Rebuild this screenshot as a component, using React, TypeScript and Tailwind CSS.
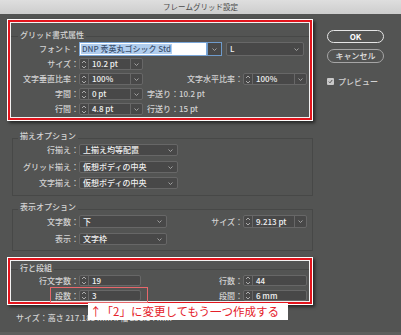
import React from "react";

const FONT = "font-['Noto_Sans_CJK_JP','Noto_Sans',sans-serif]";

function Chevron() {
  return (
    <svg width="5" height="3" viewBox="0 0 5 3" className="block">
      <path d="M0.5 0.5 L2.5 2.5 L4.5 0.5" stroke="#a9a9a9" strokeWidth="0.9" fill="none" />
    </svg>
  );
}

function UpDown() {
  return (
    <svg width="6" height="9" viewBox="0 0 6 9" className="block">
      <path d="M1 3 L3 1 L5 3 M1 6 L3 8 L5 6" stroke="#c4c4c4" strokeWidth="0.8" fill="none" />
    </svg>
  );
}

function Spinner({ value, className, chevron = true }: { value: string; className: string; chevron?: boolean }) {
  return (
    <div className={`flex shrink-0 border border-[#676767] bg-[#484848] rounded-[2px] ${className}`}>
      <div className="w-[9px] shrink-0 flex items-center justify-center border-r border-[#676767]">
        <UpDown />
      </div>
      <div className="flex-1 pl-[3px] flex items-center text-[#f0f0f0] leading-none">{value}</div>
      {chevron && (
        <div className="w-[12px] shrink-0 flex items-center justify-center border-l border-[#676767]">
          <Chevron />
        </div>
      )}
    </div>
  );
}

function Dropdown({ value, className }: { value: string; className: string }) {
  return (
    <div
      className={`flex shrink-0 items-center justify-between border border-[#676767] bg-[#484848] rounded-[2px] pl-[3px] pr-[4px] ${className}`}
    >
      <span className="text-[#f0f0f0] leading-none">{value}</span>
      <Chevron />
    </div>
  );
}

function Label({ children, className }: { children: React.ReactNode; className: string }) {
  return <div className={`shrink-0 self-center text-right leading-none text-[#d2d2d2] ${className}`}>{children}</div>;
}

function RedBox({ children, className }: { children: React.ReactNode; className: string }) {
  return (
    <div className={`border border-white shadow-[2px_2px_3px_rgba(0,0,0,0.55)] ${className}`}>
      <div className="border-2 border-[#e3141c]">
        <div className="border border-[#f2f2f2]">{children}</div>
      </div>
    </div>
  );
}

export default function App() {
  return (
    <div className={`relative w-[401px] h-[335px] overflow-hidden bg-[#535453] text-[8px] font-medium ${FONT}`}>
      {/* title bar */}
      <div className="h-[14px] bg-gradient-to-b from-[#dedede] to-[#cdcdcd] flex items-center justify-center text-[7.5px] font-normal text-[#4a4a4a]">
        フレームグリッド設定
      </div>

      <div className="flex">
        {/* left column */}
        <div className="w-[313px] pl-[7px] shrink-0">
          {/* group 1 */}
          <RedBox className="mt-[5px] w-[306px]">
            <fieldset className="mt-[8px] border-0 border-t border-[#474847] pb-[2px]">
              <legend className="ml-[7px] px-[2px] leading-[8px] pb-[3px] text-[#d6d6d6]">グリッド書式属性</legend>
              <div className="flex h-[14px]">
                <Label className="w-[68px]">フォント：</Label>
                <div className="w-[128px] shrink-0 bg-white border border-[#7aa6d8] flex items-center pl-[1px]">
                  <span className="bg-[#b0cdee] text-[#3d5270] leading-[10px] px-[1px]">DNP 秀英丸ゴシック Std</span>
                </div>
                <div className="w-[15px] shrink-0 border border-[#6f9bcb] bg-[#484848] flex items-center justify-center">
                  <Chevron />
                </div>
                <Dropdown value="L" className="ml-[4px] w-[78px]" />
              </div>
              <div className="flex h-[12px] mt-[2px]">
                <Label className="w-[68px]">サイズ：</Label>
                <Spinner value="10.2 pt" className="w-[64px]" />
              </div>
              <div className="flex h-[12px] mt-[3px]">
                <Label className="w-[68px]">文字垂直比率：</Label>
                <Spinner value="100%" className="w-[64px]" />
                <Label className="flex-1">文字水平比率：</Label>
                <Spinner value="100%" className="w-[64px] mr-[2px]" />
              </div>
              <div className="flex h-[12px] mt-[3px]">
                <Label className="w-[68px]">字間：</Label>
                <Spinner value="0 pt" className="w-[64px]" />
                <div className="ml-[4px] self-center leading-none text-[#d2d2d2]">字送り：10.2 pt</div>
              </div>
              <div className="flex h-[12px] mt-[3px]">
                <Label className="w-[68px]">行間：</Label>
                <Spinner value="4.8 pt" className="w-[64px]" />
                <div className="ml-[4px] self-center leading-none text-[#d2d2d2]">行送り：15 pt</div>
              </div>
            </fieldset>
          </RedBox>

          {/* group 2 */}
          <fieldset className="mt-[11px] ml-[5px] border border-[#474847] pb-[6px]">
            <legend className="ml-[5px] px-[2px] leading-[8px] pb-[4px] text-[#d6d6d6]">揃えオプション</legend>
            <div className="flex h-[12px]">
              <Label className="w-[66px]">行揃え：</Label>
              <Dropdown value="上揃え均等配置" className="w-[99px]" />
            </div>
            <div className="flex h-[12px] mt-[5px]">
              <Label className="w-[66px]">グリッド揃え：</Label>
              <Dropdown value="仮想ボディの中央" className="w-[99px]" />
            </div>
            <div className="flex h-[12px] mt-[4px]">
              <Label className="w-[66px]">文字揃え：</Label>
              <Dropdown value="仮想ボディの中央" className="w-[99px]" />
            </div>
          </fieldset>

          {/* group 3 */}
          <fieldset className="mt-[7px] ml-[5px] border border-[#474847] pb-[5px]">
            <legend className="ml-[5px] px-[2px] leading-[8px] pb-[4px] text-[#d6d6d6]">表示オプション</legend>
            <div className="flex h-[13px]">
              <Label className="w-[66px]">文字数：</Label>
              <Dropdown value="下" className="w-[88px]" />
              <Label className="flex-1">サイズ：</Label>
              <Spinner value="9.213 pt" className="w-[64px] mr-[5px]" />
            </div>
            <div className="flex h-[12px] mt-[5px]">
              <Label className="w-[66px]">表示：</Label>
              <Dropdown value="文字枠" className="w-[88px]" />
            </div>
          </fieldset>

          {/* group 4 */}
          <div className="relative pt-[6px]">
            <RedBox className="w-[306px]">
              <fieldset className="mt-[3px] border-0 border-t border-[#474847]">
                <legend className="ml-[7px] px-[2px] leading-[8px] pb-[3px] text-[#d6d6d6]">行と段組</legend>
                <div className="flex h-[11px]">
                  <Label className="w-[68px]">行文字数：</Label>
                  <Spinner value="19" className="w-[62px]" chevron={false} />
                  <Label className="flex-1">行数：</Label>
                  <Spinner value="44" className="w-[64px] mr-[2px]" chevron={false} />
                </div>
                <div className="flex h-[11px] mt-[4px]">
                  <Label className="w-[68px]">段数：</Label>
                  <Spinner value="3" className="w-[62px]" chevron={false} />
                  <Label className="flex-1">段間：</Label>
                  <Spinner value="6 mm" className="w-[64px] mr-[2px]" chevron={false} />
                </div>
              </fieldset>
            </RedBox>
            <div className="absolute left-[43px] top-[36px] w-[98px] h-[16px] border-[1.5px] border-[#e8676b]" />
          </div>

          <div className="mt-[8px] ml-[9px] leading-[10px] text-[#d2d2d2] whitespace-nowrap">
            サイズ：高さ 217.183 mm x 幅 231.14 mm
          </div>
        </div>

        {/* right column */}
        <div className="ml-[14px] w-[57px] shrink-0 flex flex-col">
          <div className="mt-[16px] h-[13px] rounded-full border border-[#e6e6e6] flex items-center justify-center text-white font-bold leading-none">
            OK
          </div>
          <div className="mt-[6px] h-[14px] rounded-full border border-[#a6a6a6] flex items-center justify-center text-[#e2e2e2] leading-none">
            キャンセル
          </div>
          <div className="mt-[14px] flex items-center h-[9px]">
            <div className="w-[7px] h-[7px] rounded-[1px] bg-[#c9c9c9] flex items-center justify-center">
              <svg width="5" height="5" viewBox="0 0 5 5" className="block">
                <path d="M0.8 2.6 L2 3.8 L4.2 1" stroke="#444" strokeWidth="0.9" fill="none" />
              </svg>
            </div>
            <span className="ml-[4px] leading-none text-[#d2d2d2]">プレビュー</span>
          </div>
        </div>
      </div>

      {/* annotation */}
      <div className="absolute left-[88px] top-[303px] w-[200px] h-[17px] bg-white flex items-center pl-[2px] text-[11.5px] font-normal text-[#e5212a] leading-none whitespace-nowrap">
        ↑「2」に変更してもう一つ作成する
      </div>
      <div className="absolute left-0 right-0 bottom-0 h-[3px] bg-[#5d5e5d]" />
    </div>
  );
}
